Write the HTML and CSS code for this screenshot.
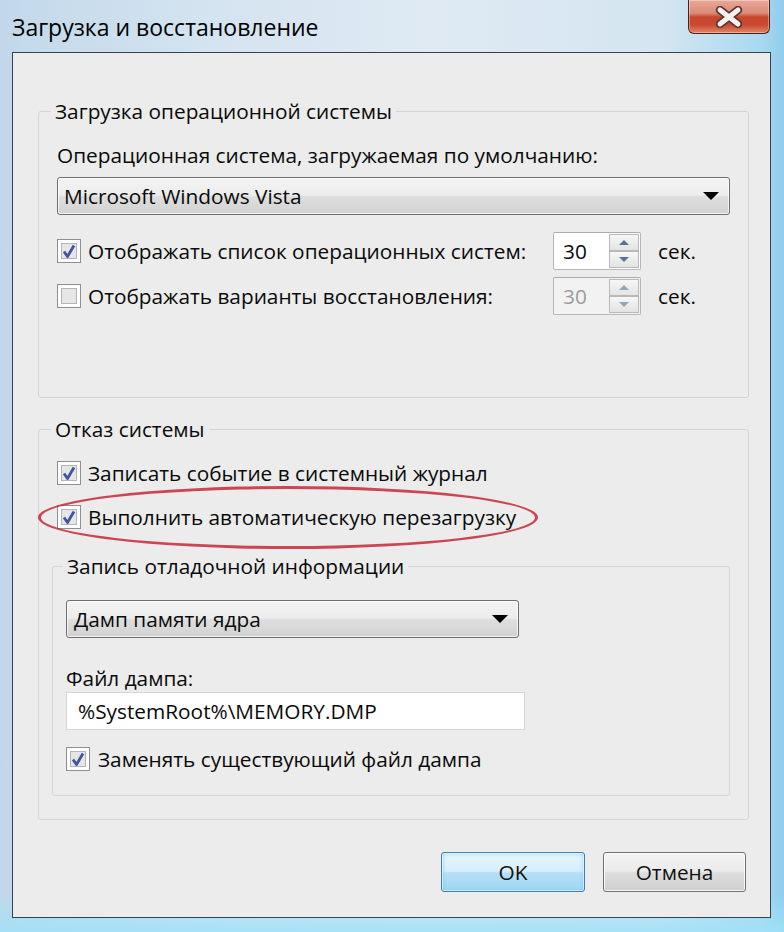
FILE: index.html
```html
<!DOCTYPE html>
<html lang="ru">
<head>
  <meta charset="UTF-8" />
  <meta name="viewport" content="width=device-width, initial-scale=1.0" />
  <title>Загрузка и восстановление</title>
  <link rel="stylesheet" href="styles.css">
</head>
<body>
  <div class="window">
    <div class="titlebar">
      <span class="title">Загрузка и восстановление</span>
      <button class="close-btn" aria-label="Закрыть">
        <svg width="30" height="22" viewBox="0 0 30 22">
          <path d="M6 4 L24 18 M24 4 L6 18" stroke="#5b3430" stroke-width="8.5" stroke-linecap="round" fill="none"/>
          <path d="M6 4 L24 18 M24 4 L6 18" stroke="#f4f1f0" stroke-width="5" stroke-linecap="round" fill="none"/>
        </svg>
      </button>
    </div>

    <div class="client">
      <fieldset class="group group-boot">
        <legend>Загрузка операционной системы</legend>
        <div class="field-label">Операционная система, загружаемая по умолчанию:</div>
        <div class="combo combo-os">
          <span>Microsoft Windows Vista</span>
          <span class="combo-arrow"></span>
        </div>

        <div class="spin-row row-first">
          <label class="check-line check-wide">
            <span class="checkbox checked"><svg width="16" height="16" viewBox="0 0 16 16"><path d="M3 8.5 L6.5 13.5 L13 2.5" stroke="#4353a3" stroke-width="2.8" fill="none" stroke-linejoin="round"/></svg></span>
            <span>Отображать список операционных систем:</span>
          </label>
          <div class="spin">
            <span class="spin-value">30</span>
            <span class="spin-btns">
              <span class="spin-btn"><span class="tri-up"></span></span>
              <span class="spin-btn"><span class="tri-down"></span></span>
            </span>
          </div>
          <span class="unit">сек.</span>
        </div>

        <div class="spin-row row-second">
          <label class="check-line check-wide">
            <span class="checkbox"></span>
            <span>Отображать варианты восстановления:</span>
          </label>
          <div class="spin disabled">
            <span class="spin-value">30</span>
            <span class="spin-btns">
              <span class="spin-btn"><span class="tri-up"></span></span>
              <span class="spin-btn"><span class="tri-down"></span></span>
            </span>
          </div>
          <span class="unit">сек.</span>
        </div>
      </fieldset>

      <fieldset class="group group-failure">
        <legend>Отказ системы</legend>
        <label class="check-line">
          <span class="checkbox checked"><svg width="16" height="16" viewBox="0 0 16 16"><path d="M3 8.5 L6.5 13.5 L13 2.5" stroke="#4353a3" stroke-width="2.8" fill="none" stroke-linejoin="round"/></svg></span>
          <span>Записать событие в системный журнал</span>
        </label>
        <label class="check-line marked">
          <span class="checkbox checked"><svg width="16" height="16" viewBox="0 0 16 16"><path d="M3 8.5 L6.5 13.5 L13 2.5" stroke="#4353a3" stroke-width="2.8" fill="none" stroke-linejoin="round"/></svg></span>
          <span>Выполнить автоматическую перезагрузку</span>
          <span class="red-ring"></span>
        </label>

        <fieldset class="group group-debug">
          <legend>Запись отладочной информации</legend>
          <div class="combo combo-dump">
            <span>Дамп памяти ядра</span>
            <span class="combo-arrow"></span>
          </div>
          <div class="field-label dump-label">Файл дампа:</div>
          <div class="textbox">%SystemRoot%\MEMORY.DMP</div>
          <label class="check-line overwrite">
            <span class="checkbox checked"><svg width="16" height="16" viewBox="0 0 16 16"><path d="M3 8.5 L6.5 13.5 L13 2.5" stroke="#4353a3" stroke-width="2.8" fill="none" stroke-linejoin="round"/></svg></span>
            <span>Заменять существующий файл дампа</span>
          </label>
        </fieldset>
      </fieldset>

      <div class="buttons">
        <button class="btn btn-default">OK</button>
        <button class="btn">Отмена</button>
      </div>
    </div>
  </div>
</body>
</html>
```

FILE: styles.css
```css
* {
  box-sizing: border-box;
}
body {
  margin: 0;
  font-family: 'Open Sans', 'Noto Sans', sans-serif;
  font-size: 20.8px;
  color: #0a0a0a;
  background-color: #c8dcec;
}
.window {
  width: 784px;
  height: 932px;
  overflow: hidden;
  background:
    linear-gradient(to bottom, rgba(255,255,255,0) 0%, rgba(255,255,255,0) 96%, rgba(160,225,248,0.9) 100%),
    linear-gradient(90deg, #c2d8ea 0%, #d3e3f0 25%, #dfeaf3 55%, #d4e5f1 85%, #a9d9f0 97%, #8fcdec 100%);
}
.titlebar {
  height: 52px;
  display: flex;
  justify-content: space-between;
  align-items: flex-start;
}
.title {
  padding-left: 12px;
  font-size: 23px;
  line-height: 54px;
  color: #000;
}
.close-btn {
  width: 82px;
  height: 34px;
  margin-right: 14px;
  padding: 0;
  border: 1px solid #4b2019;
  border-top: none;
  border-radius: 0 0 6px 6px;
  background: linear-gradient(to bottom, #e8a898 0%, #dc8a78 40%, #c8462e 52%, #c94a31 75%, #e08664 100%);
  box-shadow: inset 0 0 0 1px rgba(255,255,255,0.35);
  display: flex;
  align-items: center;
  justify-content: center;
}

.client {
  height: 866px;
  margin: 0 13px 0 12px;
  padding: 44px 21px 0 25px;
  background-color: #ececec;
  border: 1px solid #35434e;
}

.group {
  margin: 0;
  min-width: 0;
  padding: 16px 18px 0;
  border: 1px solid #cfd6db;
  border-radius: 3px;
}
.group legend {
  padding: 0 4px;
  margin-left: -6px;
  line-height: 28px;
}
.group-boot {
  padding-bottom: 82px;
}
.group-failure {
  margin-top: 17px;
  padding-bottom: 23px;
}
.group-debug {
  margin: 21px 0 0 -5px;
  padding: 20px 13px 22px;
}
.group-debug legend {
  margin-left: -3px;
}

.field-label {
  line-height: 28px;
}

.combo {
  height: 38px;
  margin-top: 8px;
  padding: 0 6px 0 6px;
  display: flex;
  align-items: center;
  justify-content: space-between;
  border: 1px solid #6f6f6f;
  border-radius: 3px;
  background: linear-gradient(to bottom, #f4f4f4 0%, #ececec 48%, #dedede 52%, #d2d2d2 100%);
  box-shadow: inset 0 0 0 1px rgba(255,255,255,0.7);
}
.combo-arrow {
  width: 0;
  height: 0;
  margin-right: 4px;
  border-left: 8px solid transparent;
  border-right: 8px solid transparent;
  border-top: 8px solid #000;
}
.combo-dump {
  width: 453px;
  margin-top: 0;
  padding-left: 7px;
}

.spin-row {
  display: flex;
  align-items: center;
  height: 38px;
}
.row-first {
  margin-top: 17px;
}
.row-second {
  margin-top: 7px;
}
.check-line {
  display: flex;
  align-items: center;
  gap: 7px;
  height: 28px;
}
.check-wide {
  width: 496px;
}
.checkbox {
  width: 24px;
  height: 24px;
  flex: none;
  padding: 3px;
  border: 1px solid #8e8f8f;
  background-color: #fff;
  display: flex;
  align-items: center;
  justify-content: center;
  box-shadow: inset 0 0 0 3px #fff, inset 0 0 0 4px #b2b4b6, inset 0 0 0 12px #e6e6e6;
  background-image: linear-gradient(135deg, #dcdcdc, #f6f6f6);
  background-clip: content-box;
}
.checkbox.checked {
  background-image: linear-gradient(135deg, #cfd3e6, #f2f3f8);
}

.spin {
  width: 88px;
  height: 38px;
  display: flex;
  border: 1px solid #b4b7bb;
  border-top-color: #a9acb1;
  border-radius: 2px;
  background-color: #fff;
}
.spin-value {
  flex: 1;
  padding-left: 9px;
  line-height: 36px;
}
.spin-btns {
  width: 32px;
  display: flex;
  flex-direction: column;
  padding: 1px;
}
.spin-btn {
  flex: 1;
  display: flex;
  align-items: center;
  justify-content: center;
  border: 1px solid #b8b8b8;
  background: linear-gradient(to bottom, #f7f7f7, #e3e3e3);
}
.tri-up,
.tri-down {
  width: 0;
  height: 0;
  border-left: 5px solid transparent;
  border-right: 5px solid transparent;
}
.tri-up {
  border-bottom: 5px solid #5d6f97;
}
.tri-down {
  border-top: 5px solid #5d6f97;
}
.spin.disabled {
  background-color: #f2f2f2;
  color: #9c9c9c;
}
.spin.disabled .tri-up {
  border-bottom-color: #9aa3b3;
}
.spin.disabled .tri-down {
  border-top-color: #9aa3b3;
}
.unit {
  margin-left: 17px;
}

.group-failure > .check-line + .check-line {
  margin-top: 16px;
}
.marked {
  position: relative;
}
.red-ring {
  position: absolute;
  left: -19px;
  top: -17px;
  width: 500px;
  height: 63px;
  border: 3.5px solid rgba(200, 40, 56, 0.85);
  border-radius: 50%;
  pointer-events: none;
}

.dump-label {
  margin-top: 28px;
  line-height: 24px;
}
.textbox {
  width: 459px;
  height: 38px;
  margin-top: 2px;
  padding-left: 11px;
  line-height: 36px;
  background-color: #fff;
  border: 1px solid #d4d7da;
}
.overwrite {
  margin-top: 15px;
  gap: 8px;
}

.buttons {
  display: flex;
  justify-content: flex-end;
  gap: 18px;
  margin: 32px 3px 0 0;
}
.btn {
  width: 143px;
  height: 40px;
  font-family: inherit;
  font-size: 20.8px;
  color: #111;
  border: 1px solid #707070;
  border-radius: 3px;
  background: linear-gradient(to bottom, #f3f3f3 0%, #ebebeb 48%, #dddddd 52%, #cfcfcf 100%);
  box-shadow: inset 0 0 0 1px rgba(255,255,255,0.8);
}
.btn-default {
  width: 144px;
  border-color: #3c7fb1;
  background: linear-gradient(to bottom, #e6f5fc 0%, #d6eefb 48%, #b4e0f7 52%, #9fd6f3 100%);
  box-shadow: inset 0 0 0 1px rgba(255,255,255,0.6), inset 0 0 4px #71c4ee;
}
```
